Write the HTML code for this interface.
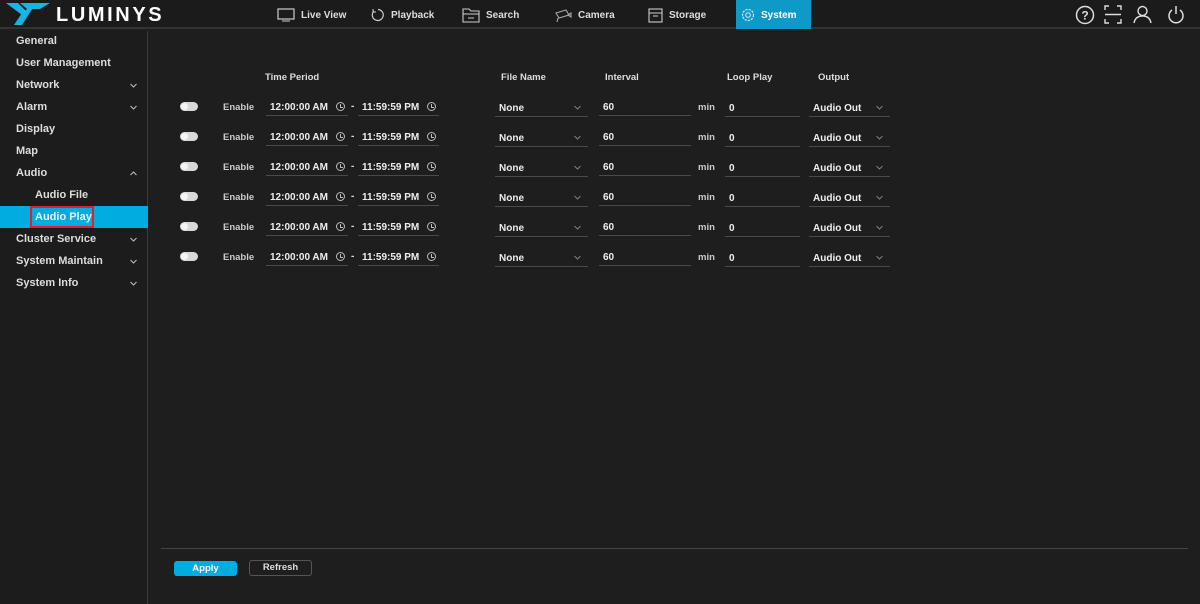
<!DOCTYPE html>
<html><head><meta charset="utf-8"><style>
*{margin:0;padding:0;box-sizing:border-box}
body{width:1200px;height:604px;background:#1e1e1e;font-family:"Liberation Sans",sans-serif;color:#ddd;font-size:11px;font-weight:bold;position:relative;overflow:hidden}
.hdr{position:absolute;left:0;top:0;width:1200px;height:29px;background:#1b1b1b;border-bottom:2px solid #333}
.a{position:absolute;white-space:nowrap}
.tab{position:absolute;top:0;height:29px;display:flex;align-items:center;gap:6px;font-size:10px;color:#ddd;padding-top:1px}
.side{position:absolute;left:0;top:31px;width:148px;height:573px;border-right:1px solid #3a3a3a;background:#1c1c1c}
.si{position:absolute;left:16px;font-size:11px;color:#ddd}
.chev{position:absolute;left:130px;width:7px;height:5px}
.ul{position:absolute;border-bottom:1px solid #4a4a4a;height:17px;font-size:10px;color:#eee;padding-left:4px;line-height:18px}
.tg{position:absolute;width:18px;height:9px;border-radius:5px;background:#d8d8d8}
.tg::after{content:"";position:absolute;left:1px;top:1px;width:7px;height:7px;border-radius:50%;background:#f4f4f4}
.clk{position:absolute;width:9px;height:9px;border:1px solid #bbb;border-radius:50%}
.clk::after{content:"";position:absolute;left:3px;top:1px;width:2px;height:3px;border-left:1px solid #bbb;border-bottom:1px solid #bbb}
.dv{position:absolute;width:7px;height:5px}
</style></head><body>
<svg width="0" height="0" style="position:absolute"><defs><symbol id="dn" viewBox="0 0 7 5"><path d="M0.5 1l3 3 3-3" fill="none" stroke="#bbb" stroke-width="1.1"/></symbol><symbol id="dn2" viewBox="0 0 7 5"><path d="M0.5 1l3 3 3-3" fill="none" stroke="#999" stroke-width="0.8"/></symbol><symbol id="up" viewBox="0 0 7 5"><path d="M0.5 4l3-3 3 3" fill="none" stroke="#bbb" stroke-width="1.1"/></symbol></defs></svg>
<div class="hdr">
<svg class="a" style="left:6px;top:3px" width="46" height="22" viewBox="0 0 46 22"><path d="M0 0h12l8 8 -4 4z" fill="#19b4e6"/><path d="M14 0h16l-14 22h-8l8-12 5-4z" fill="#19b4e6"/><path d="M30 0h14l-10 6h-8z" fill="#19b4e6"/></svg>
<div class="a" style="left:56px;top:4px;font-size:20px;font-weight:bold;letter-spacing:2.6px;color:#fff">LUMINYS</div>
<div class="tab" style="left:277px"><svg width="18" height="14"><rect x="1" y="1" width="16" height="10" fill="none" stroke="#ccc" stroke-width="1.2"/><path d="M5 13h8" stroke="#ccc"/></svg>Live View</div>
<div class="tab" style="left:371px"><svg width="14" height="14"><path d="M3 3A5.5 5.5 0 1 0 7 1.5" fill="none" stroke="#ccc" stroke-width="1.2"/><path d="M2 1v3h3" fill="none" stroke="#ccc"/></svg>Playback</div>
<div class="tab" style="left:462px"><svg width="18" height="15"><path d="M1 1h6l2 2h8v11H1z M1 6h16 M6 10h6" fill="none" stroke="#ccc" stroke-width="1.1"/></svg>Search</div>
<div class="tab" style="left:554px"><svg width="18" height="15"><path d="M2 5l10-3 3 5-10 3z M4 10l-1 4 M14 7l3 2v-4z" fill="none" stroke="#aaa" stroke-width="1.1"/></svg>Camera</div>
<div class="tab" style="left:648px"><svg width="15" height="15"><rect x="1" y="1" width="13" height="13" fill="none" stroke="#ccc" stroke-width="1.1"/><path d="M1 5h13 M5 8h5" stroke="#ccc"/></svg>Storage</div>
<div class="tab" style="left:736px;width:75px;background:#0e9ac7;padding-left:5px;color:#fff"><svg width="14" height="14"><circle cx="7" cy="7" r="5.5" fill="none" stroke="#cfeaf5" stroke-width="1.2" stroke-dasharray="2.2 1.1"/><circle cx="7" cy="7" r="2.3" fill="none" stroke="#cfeaf5"/></svg>System</div>
<svg class="a" style="left:1075px;top:5px" width="20" height="20"><circle cx="10" cy="10" r="8.5" fill="none" stroke="#ddd" stroke-width="1.5"/><text x="10" y="14.5" font-size="12" font-weight="bold" fill="#ddd" text-anchor="middle" font-family="Liberation Sans">?</text></svg>
<svg class="a" style="left:1104px;top:5px" width="18" height="19"><path d="M1 5V1h4M13 1h4v4M17 14v4h-4M5 18H1v-4M1 9.5h16" fill="none" stroke="#ddd" stroke-width="1.4"/></svg>
<svg class="a" style="left:1133px;top:5px" width="19" height="19"><circle cx="9.5" cy="6" r="4.5" fill="none" stroke="#ddd" stroke-width="1.4"/><path d="M1 18c1-5 4-7 8.5-7s7.5 2 8.5 7" fill="none" stroke="#ddd" stroke-width="1.4"/></svg>
<svg class="a" style="left:1167px;top:5px" width="18" height="19"><path d="M5 5A7 7 0 1 0 13 5M9 1v8" fill="none" stroke="#ddd" stroke-width="1.5"/></svg>
</div>
<div class="side">
<div class="si" style="top:4px">General</div>
<div class="si" style="top:26px">User Management</div>
<div class="si" style="top:48px">Network</div><svg class="chev" style="top:52px"><use href="#dn"/></svg>
<div class="si" style="top:70px">Alarm</div><svg class="chev" style="top:74px"><use href="#dn"/></svg>
<div class="si" style="top:92px">Display</div>
<div class="si" style="top:114px">Map</div>
<div class="si" style="top:136px">Audio</div><svg class="chev" style="top:140px"><use href="#up"/></svg>
<div class="si" style="top:158px;left:35px">Audio File</div>
<div class="a" style="left:0;top:175px;width:148px;height:22px;background:#00ace0"></div>
<div class="a" style="left:30px;top:175px;width:64px;height:22px;border:2px solid #e0202a;padding:3px 0 0 3px;font-size:11px;color:#eef">Audio Play</div>
<div class="si" style="top:202px">Cluster Service</div><svg class="chev" style="top:206px"><use href="#dn"/></svg>
<div class="si" style="top:224px">System Maintain</div><svg class="chev" style="top:228px"><use href="#dn"/></svg>
<div class="si" style="top:246px">System Info</div><svg class="chev" style="top:250px"><use href="#dn"/></svg>
</div>
<div class="a" style="left:265px;top:72px;font-size:9.5px">Time Period</div>
<div class="a" style="left:501px;top:72px;font-size:9.5px">File Name</div>
<div class="a" style="left:605px;top:72px;font-size:9.5px">Interval</div>
<div class="a" style="left:727px;top:72px;font-size:9.5px">Loop Play</div>
<div class="a" style="left:818px;top:72px;font-size:9.5px">Output</div>
<div id="rows"></div>
<div class="a" style="left:161px;top:548px;width:1027px;border-top:1px solid #444"></div>
<div class="a" style="left:174px;top:561px;width:63px;height:15px;background:#00ace0;border-radius:3px;text-align:center;font-size:9.5px;line-height:15px;color:#fff">Apply</div>
<div class="a" style="left:249px;top:560px;width:63px;height:16px;border:1px solid #555;border-radius:3px;text-align:center;font-size:9.5px;line-height:14px;color:#ddd">Refresh</div>
<script>
var h='';for(var i=0;i<6;i++){var y=99+30*i;
h+='<div class="tg" style="left:180px;top:'+(y+3)+'px"></div>'+
'<div class="a" style="left:223px;top:'+(y+3)+'px;font-size:9.5px;color:#ccc">Enable</div>'+
'<div class="ul" style="left:266px;top:'+y+'px;width:82px">12:00:00 AM</div><div class="clk" style="left:336px;top:'+(y+3)+'px"></div>'+
'<div class="a" style="left:351px;top:'+(y+2)+'px;font-size:10px">-</div>'+
'<div class="ul" style="left:358px;top:'+y+'px;width:81px">11:59:59 PM</div><div class="clk" style="left:427px;top:'+(y+3)+'px"></div>'+
'<div class="ul" style="left:495px;top:'+(y+1)+'px;width:93px">None</div><svg class="dv" style="left:574px;top:'+(y+6)+'px"><use href="#dn2"/></svg>'+
'<div class="ul" style="left:599px;top:'+y+'px;width:92px">60</div>'+
'<div class="a" style="left:698px;top:'+(y+3)+'px;font-size:9.5px;color:#ccc">min</div>'+
'<div class="ul" style="left:725px;top:'+(y+1)+'px;width:75px">0</div>'+
'<div class="ul" style="left:809px;top:'+(y+1)+'px;width:81px">Audio Out</div><svg class="dv" style="left:876px;top:'+(y+6)+'px"><use href="#dn2"/></svg>';}
document.getElementById('rows').innerHTML=h;
</script>
</body></html>
